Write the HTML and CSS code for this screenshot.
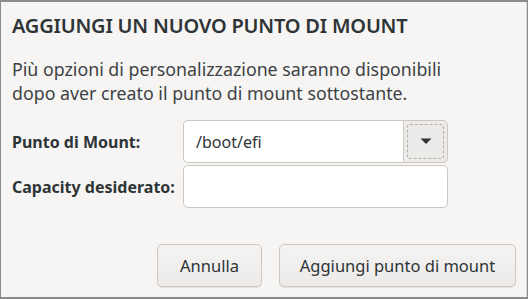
FILE: index.html
```html
<!DOCTYPE html>
<html lang="it">
<head>
<meta charset="utf-8">
<title>Aggiungi un nuovo punto di mount</title>
<link rel="stylesheet" href="styles.css">
</head>
<body>
<div class="dialog">
  <h1 class="title">AGGIUNGI UN NUOVO PUNTO DI MOUNT</h1>
  <p class="desc">Più opzioni di personalizzazione saranno disponibili<br>dopo aver creato il punto di mount sottostante.</p>
  <div class="form">
    <label class="label">Punto di Mount:</label>
    <div class="combo">
      <div class="combo-entry">/boot/efi</div>
      <div class="combo-btn"><span class="focus"><svg width="12" height="7" viewBox="0 0 12 7"><path d="M0.5 0.5h11L6 6z" fill="#2e3436"/></svg></span></div>
    </div>
    <label class="label">Capacity desiderato:</label>
    <div class="entry"></div>
  </div>
  <div class="actions">
    <button class="btn btn-cancel">Annulla</button>
    <button class="btn btn-add">Aggiungi punto di mount</button>
  </div>
</div>
</body>
</html>
```

FILE: styles.css
```css
html, body {
  margin: 0;
  padding: 0;
}
body {
  background: #8b8b8b;
  width: 528px;
  height: 299px;
  overflow: hidden;
  font-family: "Noto Sans", "Open Sans", sans-serif;
  color: #2e3436;
}
.dialog {
  box-sizing: border-box;
  margin: 2px 0 0 1px;
  width: 526px;
  height: 295px;
  background: #f6f5f4;
  border-right: 1px solid #dcd9d6;
  padding: 12px 10px 0 11px;
  display: flex;
  flex-direction: column;
}
.title {
  margin: 0;
  font-size: 20px;
  line-height: 24px;
  font-weight: 600;
  color: #2e3436;
  letter-spacing: -0.2px;
}
.desc {
  margin: 19px 0 0;
  font-size: 17.8px;
  line-height: 24px;
  color: #3d4244;
}
.form {
  margin-top: 15px;
  display: grid;
  grid-template-columns: 163px 265px;
  column-gap: 8px;
  row-gap: 2px;
  align-items: center;
}
.label {
  font-size: 16px;
  font-weight: 700;
  color: #2e3436;
  white-space: nowrap;
}
.combo {
  display: flex;
  height: 43px;
  box-sizing: border-box;
}
.combo-entry {
  flex: 1;
  box-sizing: border-box;
  background: #fff;
  border: 1px solid #cdc7c2;
  border-right: none;
  border-radius: 5px 0 0 5px;
  padding: 0 12px;
  display: flex;
  align-items: center;
  font-size: 16px;
}
.combo-btn {
  width: 45px;
  box-sizing: border-box;
  border: 1px solid #cdc7c2;
  border-radius: 0 5px 5px 0;
  background: #edebe9;
  padding: 3px;
  display: flex;
}
.focus {
  flex: 1;
  border: 1px dashed #b3afaa;
  border-radius: 3px;
  display: flex;
  align-items: center;
  justify-content: center;
}
.entry {
  height: 43px;
  box-sizing: border-box;
  background: #fff;
  border: 1px solid #cdc7c2;
  border-radius: 5px;
}
.actions {
  margin-top: 36px;
  display: flex;
  justify-content: flex-end;
  gap: 17px;
}
.btn {
  height: 43px;
  box-sizing: border-box;
  font-family: inherit;
  font-size: 16.5px;
  color: #2e3436;
  border: 1px solid #cdc7c2;
  border-radius: 5px;
  background: linear-gradient(#f4f3f2, #edebe9);
  box-shadow: 0 1px 0 rgba(0,0,0,0.07);
  padding: 0;
}
.btn-cancel { width: 105px; }
.btn-add { width: 237px; }
```
